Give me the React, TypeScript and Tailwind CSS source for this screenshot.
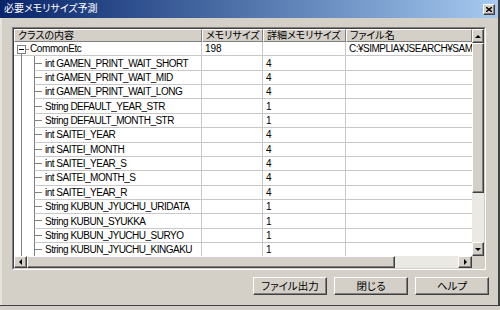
import React from 'react'

const FONT = "font-['Liberation_Sans','Noto_Sans_CJK_JP',sans-serif] [font-feature-settings:'palt']"
const RAISED =
  'border border-t-white border-l-white border-b-[#404040] border-r-[#404040] shadow-[inset_-1px_-1px_0_#808080] bg-[#d4d0c8]'

const fields: [string, string][] = [
  ['int GAMEN_PRINT_WAIT_SHORT', '4'],
  ['int GAMEN_PRINT_WAIT_MID', '4'],
  ['int GAMEN_PRINT_WAIT_LONG', '4'],
  ['String DEFAULT_YEAR_STR', '1'],
  ['String DEFAULT_MONTH_STR', '1'],
  ['int SAITEI_YEAR', '4'],
  ['int SAITEI_MONTH', '4'],
  ['int SAITEI_YEAR_S', '4'],
  ['int SAITEI_MONTH_S', '4'],
  ['int SAITEI_YEAR_R', '4'],
  ['String KUBUN_JYUCHU_URIDATA', '1'],
  ['String KUBUN_SYUKKA', '1'],
  ['String KUBUN_JYUCHU_SURYO', '1'],
  ['String KUBUN_JYUCHU_KINGAKU', '1'],
]

function Arrow({ dir }: { dir: 'up' | 'down' | 'left' | 'right' }) {
  const pts = {
    up: '1,4 4,1 7,4',
    down: '1,1 4,4 7,1',
    left: '4,1 1,4 4,7',
    right: '1,1 4,4 1,7',
  }[dir]
  const vert = dir === 'up' || dir === 'down'
  return (
    <svg width={vert ? 8 : 5} height={vert ? 5 : 8} viewBox={vert ? '0 0 8 5' : '0 0 5 8'}>
      <polygon points={pts} fill="#000" />
    </svg>
  )
}

function HeadCell({ w, children }: { w: string; children: React.ReactNode }) {
  return (
    <div
      className={`${w} flex items-center overflow-hidden whitespace-nowrap border-t border-l border-t-white border-l-white border-r border-b border-r-[#808080] border-b-[#808080] bg-[#d4d0c8] pl-[3px] text-[10px] leading-none text-black`}
    >
      {children}
    </div>
  )
}

function ChildRow({ name, detail }: { name: string; detail: string }) {
  return (
    <div className="flex h-[14.36px] shrink-0">
      <div className="relative w-[20px] shrink-0">
        <span className="absolute top-0 bottom-0 left-[7px] w-px bg-[#808080]" />
      </div>
      <div className="flex flex-1 border-b border-l border-b-[#c8c8c8] border-l-[#808080]">
        <div className="flex w-[167px] shrink-0 items-center overflow-hidden whitespace-nowrap border-r border-[#c8c8c8]">
          <span className="h-px w-[7px] shrink-0 bg-[#808080]" />
          <span className="pl-[3px] text-[10px] tracking-[-0.5px]">{name}</span>
        </div>
        <div className="w-[61px] shrink-0 border-r border-[#c8c8c8]" />
        <div className="flex w-[83px] shrink-0 items-center border-r border-[#c8c8c8] pl-[3px] text-[10px]">
          {detail}
        </div>
        <div className="flex-1" />
      </div>
    </div>
  )
}

export default function App() {
  return (
    <div className={`h-[310px] w-[500px] overflow-hidden bg-[#d4d0c8] ${FONT}`}>
      <div className="flex h-[306px] w-[500px] flex-col border-r-2 border-b border-r-[#404040] border-b-[#404040]">
        {/* title bar */}
        <div className="flex h-[18px] shrink-0 items-center justify-between bg-linear-to-r from-[#0a246a] to-[#a6caf0] pr-[3px] pl-[4px]">
          <span className="text-[10px] leading-none text-white">必要メモリサイズ予測</span>
          <div className={`flex h-[11px] w-[12px] items-center justify-center ${RAISED}`}>
            <svg width="6" height="5" viewBox="0 0 6 5">
              <path d="M0 0L6 5M6 0L0 5" stroke="#000" strokeWidth="1.4" />
            </svg>
          </div>
        </div>

        <div className="flex flex-1 flex-col border-l-2 border-[#e6e4df] pt-[9px] pl-[10px]">
          {/* grid */}
          <div className="h-[243px] w-[474px] border border-t-[#808080] border-l-[#808080] border-r-white border-b-white">
            <div className="flex h-full w-full flex-col border border-t-[#404040] border-l-[#404040] border-r-[#d4d0c8] border-b-[#d4d0c8] bg-white">
              <div className="flex min-h-0 flex-1">
                <div className="flex w-[458px] flex-col overflow-hidden">
                  <div className="flex h-[13px] shrink-0">
                    <HeadCell w="w-[188px] shrink-0">クラスの内容</HeadCell>
                    <HeadCell w="w-[61px] shrink-0">メモリサイズ</HeadCell>
                    <HeadCell w="w-[83px] shrink-0">詳細メモリサイズ</HeadCell>
                    <HeadCell w="flex-1">ファイル名</HeadCell>
                  </div>

                  {/* root row */}
                  <div className="flex h-[14.36px] shrink-0 border-b border-[#c8c8c8] text-[10px]">
                    <div className="relative flex w-[188px] shrink-0 items-center border-r border-[#c8c8c8]">
                      <span className="absolute top-[10px] bottom-[-1px] left-[7px] w-px bg-[#808080]" />
                      <span className="absolute top-[3px] left-[3px] flex h-[9px] w-[9px] items-center justify-center border border-[#808080] bg-white">
                        <span className="h-px w-[5px] bg-black" />
                      </span>
                      <span className="absolute top-[7px] left-[12px] h-px w-[3px] bg-[#808080]" />
                      <span className="pl-[16px] tracking-[-0.4px]">CommonEtc</span>
                    </div>
                    <div className="flex w-[61px] shrink-0 items-center border-r border-[#c8c8c8] pl-[3px]">198</div>
                    <div className="w-[83px] shrink-0 border-r border-[#c8c8c8]" />
                    <div className="flex min-w-0 flex-1 items-center overflow-hidden whitespace-nowrap pl-[3px] tracking-[-0.5px]">
                      C:¥SIMPLIA¥JSEARCH¥SAMPLE¥CommonEtc.java
                    </div>
                  </div>

                  {fields.map(([n, d]) => (
                    <ChildRow key={n} name={n} detail={d} />
                  ))}
                </div>

                {/* vertical scrollbar */}
                <div className="flex w-[12px] flex-col bg-[#ebe9e4]">
                  <div className={`flex h-[14px] shrink-0 items-center justify-center ${RAISED}`}>
                    <Arrow dir="up" />
                  </div>
                  <div className={`h-[150px] shrink-0 ${RAISED}`} />
                  <div className="flex-1" />
                  <div className={`flex h-[14px] shrink-0 items-center justify-center ${RAISED}`}>
                    <Arrow dir="down" />
                  </div>
                </div>
              </div>

              {/* horizontal scrollbar */}
              <div className="flex h-[12px] shrink-0">
                <div className="flex w-[458px] bg-[#ebe9e4]">
                  <div className={`flex w-[13px] shrink-0 items-center justify-center ${RAISED}`}>
                    <Arrow dir="left" />
                  </div>
                  <div className={`w-[368px] shrink-0 ${RAISED}`} />
                  <div className="flex-1" />
                  <div className={`flex w-[14px] shrink-0 items-center justify-center ${RAISED}`}>
                    <Arrow dir="right" />
                  </div>
                </div>
                <div className="flex-1 bg-[#d4d0c8]" />
              </div>
            </div>
          </div>

          {/* buttons */}
          <div className="mt-[7px] flex w-[477px] justify-end gap-[7px]">
            {['ファイル出力', '閉じる', 'ヘルプ'].map((t) => (
              <button
                key={t}
                className={`flex h-[18px] w-[74px] items-center justify-center text-[10.5px] leading-none text-black ${RAISED}`}
              >
                {t}
              </button>
            ))}
          </div>
        </div>
      </div>
    </div>
  )
}
